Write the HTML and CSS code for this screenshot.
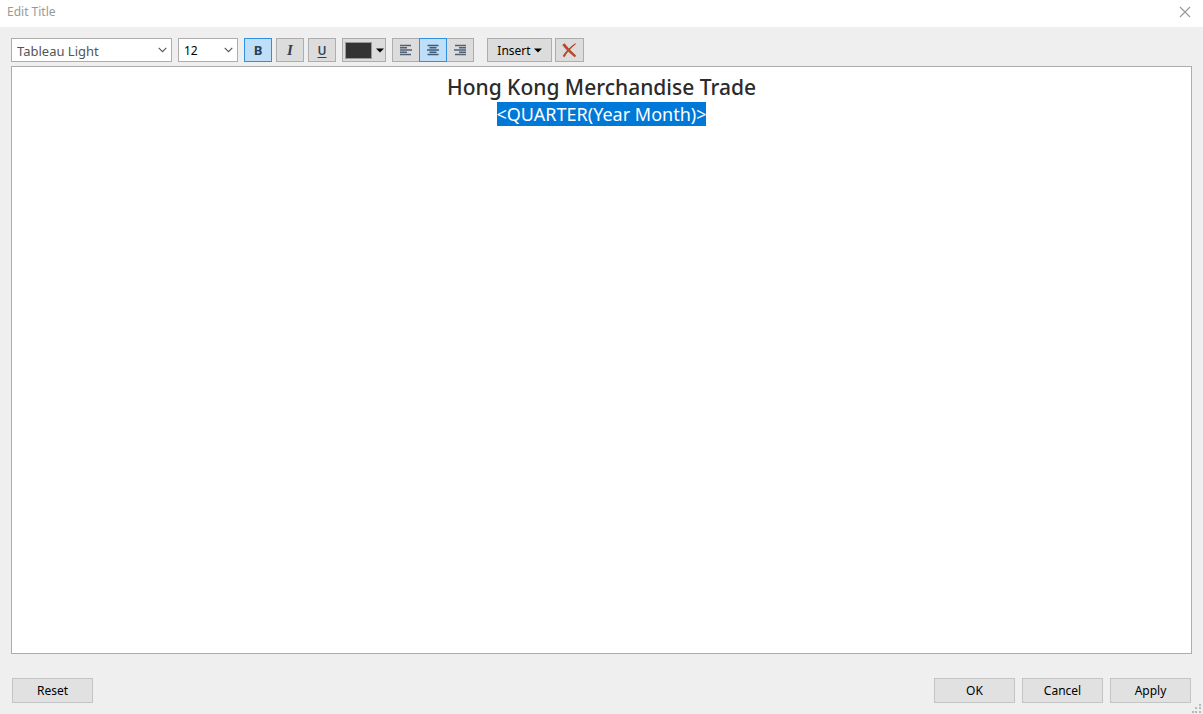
FILE: index.html
```html
<!DOCTYPE html>
<html lang="en">
<head>
<meta charset="utf-8">
<meta name="viewport" content="width=device-width, initial-scale=1">
<title>Edit Title</title>
<link rel="stylesheet" href="styles.css">
</head>
<body>
<main class="dialog">
  <header class="titlebar">
    <h1 class="titlebar-text">Edit Title</h1>
    <button class="close" type="button" aria-label="Close">
      <svg width="12" height="12" viewBox="0 0 12 12"><path d="M1 1l10 10M11 1L1 11" stroke="#999" stroke-width="1.2" fill="none"/></svg>
    </button>
  </header>
  <div class="content">
    <div class="toolbar" role="toolbar" aria-label="Formatting">
      <div class="combos">
        <div class="combo combo-font">
          <select class="select select-font" aria-label="Font"><option>Tableau Light</option></select>
          <svg class="chevron" width="9" height="6" viewBox="0 0 9 6"><path d="M.7.9l3.800 3.800L8.300.9" stroke="#555" stroke-width="1.1" fill="none"/></svg>
        </div>
        <div class="combo combo-size">
          <select class="select select-size" aria-label="Font size"><option>12</option></select>
          <svg class="chevron" width="9" height="6" viewBox="0 0 9 6"><path d="M.7.9l3.800 3.800L8.300.9" stroke="#555" stroke-width="1.1" fill="none"/></svg>
        </div>
      </div>
      <div class="styles">
        <button class="tool active bold" type="button" aria-label="Bold" aria-pressed="true">B</button>
        <button class="tool italic" type="button" aria-label="Italic">I</button>
        <button class="tool underline" type="button" aria-label="Underline">U</button>
      </div>
      <button class="tool color" type="button" aria-label="Text color">
        <span class="swatch"></span>
        <svg width="8" height="5" viewBox="0 0 8 5"><path d="M0 .5h8L4 4.500z" fill="#000"/></svg>
      </button>
      <div class="align">
        <button class="tool" type="button" aria-label="Align left">
          <svg width="12" height="12" viewBox="0 0 12 12"><path d="M0 1.500h11M0 3.800h7M0 6h12M0 8.200h7M0 10.500h11" stroke="#4f6074" stroke-width="1.4" fill="none"/></svg>
        </button>
        <button class="tool active" type="button" aria-label="Align center" aria-pressed="true">
          <svg width="12" height="12" viewBox="0 0 12 12"><path d="M.5 1.500h11M2.500 3.800h7M0 6h12M2.500 8.200h7M.5 10.500h11" stroke="#3f5a76" stroke-width="1.4" fill="none"/></svg>
        </button>
        <button class="tool" type="button" aria-label="Align right">
          <svg width="12" height="12" viewBox="0 0 12 12"><path d="M1 1.500h11M5 3.800h7M0 6h12M5 8.200h7M1 10.500h11" stroke="#4f6074" stroke-width="1.4" fill="none"/></svg>
        </button>
      </div>
      <div class="inserts">
        <button class="tool insert" type="button">Insert
          <svg width="8" height="5" viewBox="0 0 8 5"><path d="M0 .5h8L4 4.500z" fill="#000"/></svg>
        </button>
        <button class="tool clear" type="button" aria-label="Clear">
          <svg width="15" height="15" viewBox="0 0 15 15"><path d="M.3 2L2.500.3Q7 6.500 14.300 12.800L12.600 14.200Q5 8.500.3 2z" fill="#b9482b"/><path d="M14 1Q6 7.500 2.500 14.300L.7 12.900Q5 6 13.200.2z" fill="#b9482b"/></svg>
        </button>
      </div>
    </div>
    <div class="editor" contenteditable="true" role="textbox" aria-multiline="true" aria-label="Title" spellcheck="false">
      <p class="line line-title">Hong Kong Merchandise Trade</p>
      <p class="line line-field"><span class="selected">&lt;QUARTER(Year Month)&gt;</span></p>
    </div>
    <footer class="footer">
      <button class="action" type="button">Reset</button>
      <div class="confirm">
        <button class="action" type="button">OK</button>
        <button class="action" type="button">Cancel</button>
        <button class="action" type="button">Apply</button>
      </div>
    </footer>
  </div>
  <svg class="grip" width="9" height="9" viewBox="0 0 9 9" aria-hidden="true"><path d="M7 0h2v2H7zM3 3h2v2H3zM7 3h2v2H7zM0 7h2v2H0zM3 7h2v2H3zM7 7h2v2H7z" fill="#b9b9b9"/></svg>
</main>
</body>
</html>
```
FILE: styles.css
```css
* {
  box-sizing: border-box;
}

body {
  margin: 0;
  font-family: "Noto Sans", "Open Sans", sans-serif;
  font-size: 12px;
  color: #000;
}

button,
select {
  margin: 0;
  padding: 0;
  font: inherit;
  color: inherit;
}

.dialog {
  position: relative;
  display: flex;
  flex-direction: column;
  min-height: 100vh;
  background: #efefef;
}

.titlebar {
  display: flex;
  justify-content: space-between;
  align-items: center;
  height: 27px;
  padding: 0 12px 4px 7px;
  background: #fff;
}

.titlebar-text {
  margin: 0;
  font-size: 12px;
  font-weight: 400;
  color: #999;
}

.close {
  display: flex;
  border: 0;
  background: none;
}

.content {
  flex: 1;
  display: flex;
  flex-direction: column;
  padding: 11px;
}

.toolbar,
.combos,
.styles,
.inserts,
.align {
  display: flex;
}

.toolbar {
  gap: 6px;
  margin-bottom: 4px;
}

.combos {
  gap: 6px;
}

.styles {
  gap: 4px;
}

.inserts {
  gap: 3px;
  margin-left: 7px;
}

.combo {
  position: relative;
}

.combo-font {
  width: 161px;
}

.combo-size {
  width: 60px;
}

.select {
  appearance: none;
  display: block;
  width: 100%;
  height: 24px;
  padding: 0 5px;
  border: 1px solid #adadad;
  border-radius: 0;
  background: #fff;
}

.select-font {
  padding-top: 2px;
  font-size: 13px;
  color: #555;
}

.chevron {
  position: absolute;
  top: 9px;
  right: 5px;
  pointer-events: none;
}

.tool {
  display: flex;
  align-items: center;
  justify-content: center;
  width: 28px;
  height: 24px;
  border: 1px solid #adadad;
  background: #dcdcdc;
}

.active {
  position: relative;
  border-color: #2f8fe0;
  background: #bfdef7;
}

.bold,
.italic,
.underline {
  font-weight: 700;
  color: #2f3f56;
}

.bold {
  font-size: 13px;
}

.italic {
  font-family: "Liberation Serif", serif;
  font-size: 15px;
  font-style: italic;
}

.underline {
  font-weight: 600;
  text-decoration: underline;
  text-underline-offset: 2px;
}

.color {
  width: 44px;
  gap: 4px;
}

.swatch {
  width: 27px;
  height: 17px;
  border: 1px solid #999;
  background: #333;
}

.align .tool + .tool {
  margin-left: -1px;
}

.insert {
  width: 65px;
  gap: 3px;
}

.clear {
  width: 29px;
}

.editor {
  flex: 1;
  padding: 6px 8px;
  border: 1px solid #adadad;
  background: #fff;
  text-align: center;
  color: #2b2b2b;
  outline: 0;
}

.line {
  margin: 0;
}

.line-title {
  font-size: 21px;
  font-weight: 500;
  line-height: 29px;
}

.line-field {
  font-size: 18px;
  line-height: 24px;
}

.selected {
  display: inline-block;
  background: #0078d7;
  color: #fff;
}

.footer,
.confirm {
  display: flex;
}

.footer {
  justify-content: space-between;
  margin-top: 24px;
  padding: 0 1px;
}

.confirm {
  gap: 7px;
}

.action {
  width: 81px;
  height: 25px;
  border: 1px solid #c4c4c4;
  background: #e1e1e1;
}

.grip {
  position: absolute;
  right: 2px;
  bottom: 1px;
}
```
